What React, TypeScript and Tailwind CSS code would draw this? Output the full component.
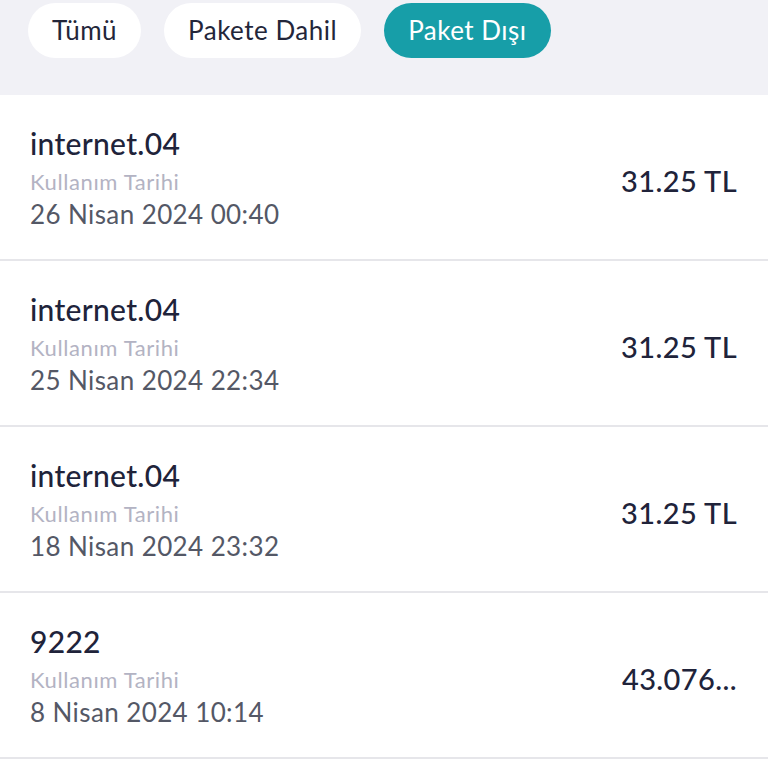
import React, { useState } from "react";

type Usage = {
  id: number;
  title: string;
  date: string;
  amount: string;
};

const usages: Usage[] = [
  { id: 1, title: "internet.04", date: "26 Nisan 2024 00:40", amount: "31.25 TL" },
  { id: 2, title: "internet.04", date: "25 Nisan 2024 22:34", amount: "31.25 TL" },
  { id: 3, title: "internet.04", date: "18 Nisan 2024 23:32", amount: "31.25 TL" },
  { id: 4, title: "9222", date: "8 Nisan 2024 10:14", amount: "43.076..." },
];

const tabs = ["Tümü", "Pakete Dahil", "Paket Dışı"];

function App() {
  const [active, setActive] = useState("Paket Dışı");

  return (
    <div className="min-h-[768px] bg-white font-['Lato','Noto_Sans',sans-serif]">
      {/* filter pills */}
      <div className="flex h-[95px] items-start gap-[23px] bg-[#f1f1f6] px-[28px] pt-[3px]">
        {tabs.map((tab) => (
          <button
            key={tab}
            onClick={() => setActive(tab)}
            className={`flex h-[55px] items-center rounded-full px-[24px] text-[26px] tracking-[0.5px] ${
              active === tab
                ? "bg-[#179ea8] text-white"
                : "bg-white text-[#23263a]"
            }`}
          >
            {tab}
          </button>
        ))}
      </div>

      {/* usage list */}
      <div>
        {usages.map((u) => (
          <div
            key={u.id}
            className="flex h-[166px] items-center justify-between border-b-2 border-[#e6e6ea] pl-[30px] pr-[31px]"
          >
            <div className="flex flex-col">
              <span className="text-[30px] leading-[34px] font-medium tracking-[0.3px] text-[#20233a]">
                {u.title}
              </span>
              <span className="mt-[9px] text-[22px] leading-[26px] tracking-[0.6px] text-[#b3b3c3]">
                Kullanım Tarihi
              </span>
              <span className="mt-[4px] text-[26px] leading-[30px] tracking-[0.4px] text-[#545866]">
                {u.date}
              </span>
            </div>
            <span className="mt-[8px] text-[29px] font-medium tracking-[0.4px] text-[#20233a]">
              {u.amount}
            </span>
          </div>
        ))}
      </div>
    </div>
  );
}

export default App;
